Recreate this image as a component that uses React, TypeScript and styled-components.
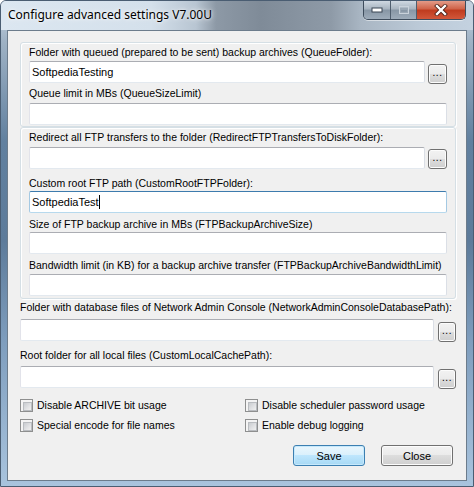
import React from "react";
import styled, { createGlobalStyle, css } from "styled-components";

const GlobalStyle = createGlobalStyle`
  html, body { margin: 0; padding: 0; background: #ffffff; }
  * { box-sizing: border-box; }
`;

const UI_FONT = `"Liberation Sans", Arial, sans-serif`;

const Window = styled.div`
  width: 474px;
  height: 487px;
  display: flex;
  flex-direction: column;
  border: 1px solid #4a5d72;
  border-radius: 6px 6px 0 0;
  background: linear-gradient(
    180deg,
    #c9d6e2 0px,
    #9fb2c5 40px,
    #61809f 140px,
    #5d7b9a 240px,
    #7e9dbd 340px,
    #a9c4de 486px
  );
  overflow: hidden;
`;

const TitleBar = styled.div`
  height: 29px;
  display: flex;
  align-items: flex-start;
  padding-left: 7px;
  background: linear-gradient(
    90deg,
    #dce7f1 0px,
    #d4e0eb 150px,
    #b8c5d2 195px,
    #8d99a6 215px,
    #7f8b98 260px,
    #8e9aa7 330px,
    #a9b6c3 360px,
    #bccad8 420px,
    #c4d2e0 474px
  );
`;

const Title = styled.div`
  margin-top: 6px;
  font-family: "Noto Sans", "Open Sans", sans-serif;
  font-size: 12px;
  line-height: 16px;
  color: #000;
  text-shadow: 0 0 6px rgba(255, 255, 255, 0.9), 0 0 3px rgba(255, 255, 255, 0.9);
`;

const CaptionGroup = styled.div`
  margin-left: auto;
  margin-right: 7px;
  margin-top: -1px;
  display: flex;
  height: 20px;
  border: 1px solid #3e4c5c;
  border-top: none;
  border-radius: 0 0 5px 5px;
  overflow: hidden;
  box-shadow: 0 1px 0 rgba(255, 255, 255, 0.5);
`;

const CaptionButton = styled.div<{ $kind: "min" | "max" | "close" }>`
  height: 19px;
  display: flex;
  align-items: center;
  justify-content: center;
  ${({ $kind }) =>
    $kind === "close"
      ? css`
          width: 48px;
          background: linear-gradient(180deg, #e6a290 0%, #d0654b 45%, #c03c1f 55%, #d2573a 100%);
        `
      : css`
          width: ${$kind === "min" ? 27 : 26}px;
          border-right: 1px solid #4f5e6e;
          background: linear-gradient(180deg, #d4dde6 0%, #aab6c2 45%, #8897a6 55%, #9eacba 100%);
        `}
`;

const Client = styled.div`
  flex: 1;
  margin: 0 6px 5px 6px;
  border: 1px solid #6c7c8c;
  background: #f0f0f0;
  padding: 11px 10px 0 12px;
  display: flex;
  flex-direction: column;
  font-family: ${UI_FONT};
  font-size: 10.5px;
  color: #000;
`;

const Group = styled.div<{ $padTop: number; $padBottom: number }>`
  width: 436px;
  border: 1px solid #d5dfe5;
  border-radius: 3px;
  box-shadow: inset 1px 1px 0 #ffffff, 1px 1px 0 #ffffff;
  padding: ${({ $padTop, $padBottom }) => `${$padTop}px 8px ${$padBottom}px 8px`};
  display: flex;
  flex-direction: column;
`;

const Label = styled.div<{ $mt?: number }>`
  height: 13px;
  line-height: 13px;
  white-space: nowrap;
  flex: none;
  margin-top: ${({ $mt = 0 }) => $mt}px;
`;

const Row = styled.div<{ $mt?: number; $gap: number }>`
  display: flex;
  align-items: flex-start;
  flex: none;
  gap: ${({ $gap }) => $gap}px;
  margin-top: ${({ $mt = 0 }) => $mt}px;
`;

const TextBox = styled.div<{ $mt?: number; $focused?: boolean; $grow?: boolean }>`
  flex: ${({ $grow }) => ($grow ? "1 1 0" : "none")};
  min-width: 0;
  height: 22px;
  margin-top: ${({ $mt = 0 }) => $mt}px;
  background: #ffffff;
  border: 1px solid;
  border-radius: 2px;
  border-color: ${({ $focused }) =>
    $focused ? "#3d7bad #a4c9e3 #b7d9ed #a4c9e3" : "#abadb3 #dbdfe6 #e3e9ef #e2e3ea"};
  padding: 0 2px;
  line-height: 20px;
  white-space: nowrap;
  display: flex;
  align-items: center;
  font-size: 11px;
`;

const Caret = styled.span`
  display: inline-block;
  width: 1px;
  height: 14px;
  background: #000;
`;

const BrowseButton = styled.div<{ $mt: number; $w: number }>`
  flex: none;
  width: ${({ $w }) => $w}px;
  height: 20px;
  margin-top: ${({ $mt }) => $mt}px;
  border: 1px solid #707070;
  border-radius: 3px;
  background: linear-gradient(180deg, #f2f2f2 0%, #ebebeb 50%, #dddddd 50%, #cfcfcf 100%);
  box-shadow: inset 0 0 0 1px #fcfcfc;
  font-size: 10px;
  line-height: 10px;
  display: flex;
  align-items: flex-end;
  justify-content: center;
  padding-bottom: 5px;
  letter-spacing: 0.5px;
`;

const CheckGrid = styled.div`
  display: grid;
  grid-template-columns: 225px auto;
  row-gap: 7px;
  margin-top: 10px;
  flex: none;
`;

const CheckItem = styled.div`
  display: flex;
  align-items: center;
  gap: 4px;
  height: 13px;
  line-height: 13px;
  white-space: nowrap;
`;

const CheckBox = styled.span`
  width: 13px;
  height: 13px;
  flex: none;
  border: 1px solid #8e8f8f;
  background: #f4f4f4;
  padding: 2px;
  display: inline-block;
  &::after {
    content: "";
    display: block;
    width: 100%;
    height: 100%;
    border: 1px solid #b9bcc0;
    background: linear-gradient(135deg, #c9ccd0 0%, #e2e3e5 60%, #f0f0f0 100%);
  }
`;

const ButtonRow = styled.div`
  display: flex;
  justify-content: flex-end;
  gap: 16px;
  margin-top: 13px;
  padding-right: 3px;
  flex: none;
`;

const DialogButton = styled.div<{ $default?: boolean }>`
  width: 72px;
  height: 21px;
  border: 1px solid ${({ $default }) => ($default ? "#3c7fb1" : "#707070")};
  border-radius: 3px;
  display: flex;
  align-items: center;
  justify-content: center;
  font-size: 11px;
  background: ${({ $default }) =>
    $default
      ? "linear-gradient(180deg, #eaf6fd 0%, #d9f0fc 50%, #bee6fd 50%, #a7d9f5 100%)"
      : "linear-gradient(180deg, #f2f2f2 0%, #ebebeb 50%, #dddddd 50%, #cfcfcf 100%)"};
  box-shadow: inset 0 0 0 1px ${({ $default }) => ($default ? "#c6e9fc" : "#fcfcfc")};
`;

const MinGlyph = () => (
  <svg width="12" height="6" viewBox="0 0 12 6">
    <rect x="1" y="1" width="10" height="4" fill="#ffffff" stroke="#3b4654" strokeWidth="1" />
  </svg>
);

const MaxGlyph = () => (
  <svg width="12" height="10" viewBox="0 0 12 10">
    <rect x="1.5" y="1.5" width="9" height="7" fill="none" stroke="#c9d2db" strokeWidth="1" />
    <rect x="2.5" y="3.5" width="7" height="4" fill="none" stroke="#9aa7b4" strokeWidth="1" />
  </svg>
);

const CloseGlyph = () => (
  <svg width="14" height="12" viewBox="0 0 14 12">
    <path d="M3 2 L11 10 M11 2 L3 10" stroke="#4a1c12" strokeWidth="4" strokeLinecap="square" />
    <path d="M3 2 L11 10 M11 2 L3 10" stroke="#ffffff" strokeWidth="2.4" strokeLinecap="square" />
  </svg>
);

export default function App() {
  return (
    <>
      <GlobalStyle />
      <Window>
        <TitleBar>
          <Title>Configure advanced settings V7.00U</Title>
          <CaptionGroup>
            <CaptionButton $kind="min">
              <MinGlyph />
            </CaptionButton>
            <CaptionButton $kind="max">
              <MaxGlyph />
            </CaptionButton>
            <CaptionButton $kind="close">
              <CloseGlyph />
            </CaptionButton>
          </CaptionGroup>
        </TitleBar>
        <Client>
          <Group $padTop={3} $padBottom={1}>
            <Label>Folder with queued (prepared to be sent) backup archives (QueueFolder):</Label>
            <Row $mt={2} $gap={3}>
              <TextBox $grow>SoftpediaTesting</TextBox>
              <BrowseButton $mt={3} $w={19}>...</BrowseButton>
            </Row>
            <Label $mt={3}>Queue limit in MBs (QueueSizeLimit)</Label>
            <TextBox $mt={3} />
          </Group>
          <Group $padTop={3} $padBottom={2}>
            <Label>Redirect all FTP transfers to the folder (RedirectFTPTransfersToDiskFolder):</Label>
            <Row $mt={3} $gap={3}>
              <TextBox $grow />
              <BrowseButton $mt={2} $w={19}>...</BrowseButton>
            </Row>
            <Label $mt={8}>Custom root FTP path (CustomRootFTPFolder):</Label>
            <TextBox $mt={1} $focused>
              SoftpediaTest
              <Caret />
            </TextBox>
            <Label $mt={5}>Size of FTP backup archive in MBs (FTPBackupArchiveSize)</Label>
            <TextBox $mt={1} />
            <Label $mt={5}>
              Bandwidth limit (in KB) for a backup archive transfer (FTPBackupArchiveBandwidthLimit)
            </Label>
            <TextBox $mt={2} />
          </Group>
          <Label $mt={2}>
            Folder with database files of Network Admin Console (NetworkAdminConsoleDatabasePath):
          </Label>
          <Row $mt={5} $gap={4}>
            <TextBox $grow />
            <BrowseButton $mt={3} $w={18}>...</BrowseButton>
          </Row>
          <Label $mt={7}>Root folder for all local files (CustomLocalCachePath):</Label>
          <Row $mt={4} $gap={4}>
            <TextBox $grow />
            <BrowseButton $mt={3} $w={18}>...</BrowseButton>
          </Row>
          <CheckGrid>
            <CheckItem>
              <CheckBox />
              Disable ARCHIVE bit usage
            </CheckItem>
            <CheckItem>
              <CheckBox />
              Disable scheduler password usage
            </CheckItem>
            <CheckItem>
              <CheckBox />
              Special encode for file names
            </CheckItem>
            <CheckItem>
              <CheckBox />
              Enable debug logging
            </CheckItem>
          </CheckGrid>
          <ButtonRow>
            <DialogButton $default>Save</DialogButton>
            <DialogButton>Close</DialogButton>
          </ButtonRow>
        </Client>
      </Window>
    </>
  );
}
